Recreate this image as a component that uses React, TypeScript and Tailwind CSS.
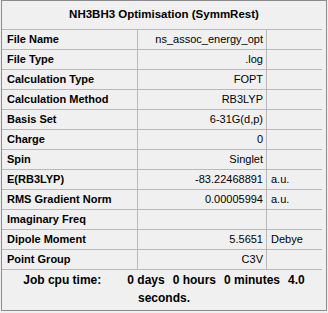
const ROWS: { label: string; value: string; unit?: string }[] = [
  { label: 'File Name', value: 'ns_assoc_energy_opt' },
  { label: 'File Type', value: '.log' },
  { label: 'Calculation Type', value: 'FOPT' },
  { label: 'Calculation Method', value: 'RB3LYP' },
  { label: 'Basis Set', value: '6-31G(d,p)' },
  { label: 'Charge', value: '0' },
  { label: 'Spin', value: 'Singlet' },
  { label: 'E(RB3LYP)', value: '-83.22468891', unit: 'a.u.' },
  { label: 'RMS Gradient Norm', value: '0.00005994', unit: 'a.u.' },
  { label: 'Imaginary Freq', value: '' },
  { label: 'Dipole Moment', value: '5.5651', unit: 'Debye' },
  { label: 'Point Group', value: 'C3V' },
]

export default function App() {
  return (
    <div className="h-[313px] w-[328px] bg-[#f0f0f0] font-['Liberation_Sans',Arial,sans-serif] text-[11px] text-black">
      <div className="ml-px h-[311px] w-[326px] border border-[#8c8c8c] bg-[#f0f0f0]">
        {/* title */}
        <div className="flex h-[28px] items-center justify-center text-[11.5px] font-bold">
          NH3BH3 Optimisation (SymmRest)
        </div>

        {/* summary grid */}
        <div className="w-[320px] border-t border-[#b9b9b9]">
          {ROWS.map((r) => (
            <div key={r.label} className="flex h-[20px] border-b border-[#b9b9b9]">
              <div className="flex w-[136px] items-center border-r border-[#b9b9b9] pl-[5px] font-bold">
                {r.label}
              </div>
              <div className="flex w-[129px] items-center justify-end border-r border-[#b9b9b9] pr-[3px]">
                {r.value}
              </div>
              <div className="flex flex-1 items-center pl-[4px]">{r.unit}</div>
            </div>
          ))}
        </div>

        {/* cpu time footer */}
        <div className="mt-px text-center text-[12px] font-bold leading-[18px]">
          <div className="flex justify-center">
            <span className="mr-[26px]">Job cpu time:</span>
            <span className="mr-[8px]">0 days</span>
            <span className="mr-[8px]">0 hours</span>
            <span className="mr-[8px]">0 minutes</span>
            <span>4.0</span>
          </div>
          <div>seconds.</div>
        </div>
      </div>
    </div>
  )
}
